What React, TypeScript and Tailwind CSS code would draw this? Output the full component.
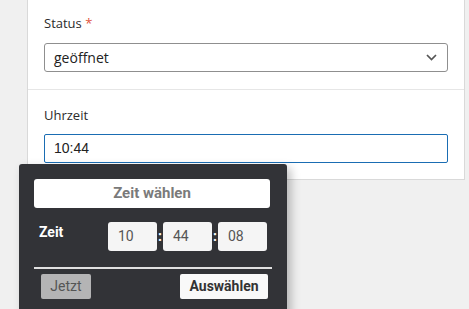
import React from 'react';

const App: React.FC = () => {
  const parts = ['10', '44', '08'];

  return (
    <div className="relative w-[469px] h-[309px] overflow-hidden bg-[#f0f0f0]">
      {/* Form card */}
      <div className="ml-[27px] w-[438px] bg-white border-x border-b border-[#d9d9d9] font-['Open_Sans',sans-serif]">
        <div className="px-[16px] pt-[14px] pb-[17px] border-b border-[#e6e6e6]">
          <label className="block text-[13px] leading-[18px] font-medium text-[#2b2b2b] mb-[11px]">
            Status <span className="text-[#e0533c]">*</span>
          </label>
          <div className="flex items-center justify-between h-[29px] w-[404px] pl-[9px] pr-[10px] border border-[#8f8f8f] rounded-[3px] text-[14px] text-[#222]">
            <span>geöffnet</span>
            <svg width="11" height="7" viewBox="0 0 11 7" fill="none">
              <path d="M1 1l4.5 4.5L10 1" stroke="#555" strokeWidth="1.7" />
            </svg>
          </div>
        </div>
        <div className="px-[16px] pt-[16px] pb-[16px]">
          <label className="block text-[13px] leading-[18px] font-medium text-[#2b2b2b] mb-[10px]">Uhrzeit</label>
          <div className="flex items-center h-[29px] w-[404px] pl-[9px] border border-[#1a6db3] rounded-[2px] text-[14px] text-[#222] font-['Liberation_Sans',sans-serif]">
            10:44
          </div>
        </div>
      </div>

      {/* Time picker popup */}
      <div className="absolute left-[19px] top-[164px] w-[268px] h-[160px] bg-[#323337] rounded-[3px] px-[15px] pt-[15px] shadow-[4px_4px_10px_rgba(0,0,0,0.25)] font-['Roboto',sans-serif]">
        <div className="flex items-center justify-center w-[236px] h-[29px] bg-white rounded-[3px] text-[15px] font-bold text-[#7a7a7a]">
          Zeit wählen
        </div>
        <div className="flex items-center mt-[14px] h-[29px]">
          <span className="self-start w-[74px] pl-[5px] text-[14px] leading-[20px] font-bold text-white">Zeit</span>
          {parts.map((p, i) => (
            <React.Fragment key={i}>
              {i > 0 && <span className="w-[6px] text-center text-[14px] font-bold text-white">:</span>}
              <div className="flex items-center w-[49px] h-[29px] pl-[10px] bg-[#f5f5f5] rounded-[3px] text-[14px] text-[#555]">
                {p}
              </div>
            </React.Fragment>
          ))}
        </div>
        <div className="mt-[16px] w-[238px] h-[2px] bg-[#e0e0e0]" />
        <div className="flex justify-between mt-[5px] pl-[7px] pr-[4px]">
          <button className="w-[50px] h-[25px] bg-[#b4b4b5] rounded-[2px] text-[14px] text-[#555]">Jetzt</button>
          <button className="w-[88px] h-[25px] bg-[#f9f9f9] rounded-[2px] text-[14px] font-bold text-[#333]">Auswählen</button>
        </div>
      </div>
    </div>
  );
};

export default App;
